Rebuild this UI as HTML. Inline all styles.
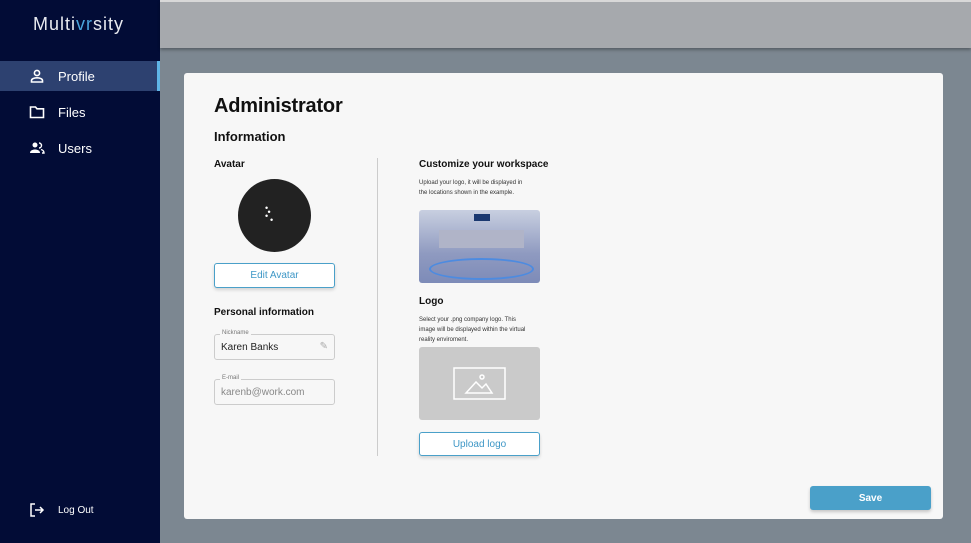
<!DOCTYPE html><html><head><style>
*{box-sizing:border-box;margin:0;padding:0}
body{width:971px;height:543px;overflow:hidden;background:#7c8791;font-family:"Liberation Sans",sans-serif;position:relative}
.side{position:absolute;left:0;top:0;width:160px;height:543px;background:#020c36;color:#fff}
.logo{position:absolute;left:33px;top:14px;font-size:18px;letter-spacing:1px;color:#e8eaf0}
.logo span{color:#4aa6df}
.nav{position:absolute;left:0;width:160px;height:30px;font-size:13px;display:flex;align-items:center}
.nav svg{position:absolute;left:29px}
.nav b{position:absolute;left:58px;font-weight:normal}
.act{background:#2d4170;border-right:3px solid #5fb5e6}
.top{position:absolute;left:160px;top:0;width:811px;height:48px;background:#a6a9ad;box-shadow:0 2px 3px rgba(0,0,0,.3);border-top:2px solid #d8d8d8}
.panel{position:absolute;left:184px;top:73px;width:759px;height:446px;background:#f7f7f7;border-radius:3px}
.a{position:absolute;color:#111}
.btn{position:absolute;border:1.5px solid #4aa0c9;border-radius:3px;background:#fff;color:#3e97c6;font-size:10px;display:flex;align-items:center;justify-content:center;box-shadow:0 2px 3px rgba(0,0,0,.15)}
.fld{position:absolute;border:1px solid #ccc;border-radius:3px;width:121px;height:26px;font-size:10px;color:#222;padding:7px 0 0 6px}
.fld i{position:absolute;top:-5px;left:5px;background:#f7f7f7;font-size:6px;color:#777;font-style:normal;padding:0 2px}
</style></head><body>
<div class="side">
<div class="logo">Multi<span>vr</span>sity</div>
<div class="nav act" style="top:61px"><svg width="16" height="16" viewBox="0 0 16 16" fill="none" stroke="#fff" stroke-width="1.6"><circle cx="8" cy="5" r="2.6"/><path d="M2.5 14v-1.5c0-1.5 2.5-2.7 5.5-2.7s5.5 1.2 5.5 2.7V14z"/></svg><b>Profile</b></div>
<div class="nav" style="top:97px"><svg width="16" height="16" viewBox="0 0 16 16" fill="none" stroke="#fff" stroke-width="1.6"><path d="M1.5 3h5l1.5 1.8h6.5v8.7h-13z"/></svg><b>Files</b></div>
<div class="nav" style="top:133px"><svg width="16" height="16" viewBox="0 0 16 16" fill="#fff"><circle cx="6" cy="5" r="2.5"/><path d="M1 13c0-2.5 2.5-3.5 5-3.5s5 1 5 3.5z"/><path d="M10 3a2.5 2.5 0 010 5M12 9.5c2 .5 3 1.5 3 3.5h-2" fill="none" stroke="#fff" stroke-width="1.4"/></svg><b>Users</b></div>
<div class="nav" style="top:495px;font-size:10px"><svg width="16" height="16" viewBox="0 0 16 16" fill="none" stroke="#fff" stroke-width="1.5"><path d="M6 2H2v12h4M6 8h8M11 5l3 3-3 3"/></svg><b>Log Out</b></div>
</div>
<div class="top"></div>
<div class="panel">
<div class="a" style="left:30px;top:22px;font-size:20px;font-weight:bold;letter-spacing:-.2px">Administrator</div>
<div class="a" style="left:30px;top:56px;font-size:13px;font-weight:bold">Information</div>
<div class="a" style="left:30px;top:86px;font-size:10px;font-weight:bold">Avatar</div>
<div style="position:absolute;left:54px;top:106px;width:73px;height:73px;border-radius:50%;background:#222"></div>
<div style="position:absolute;left:81px;top:133px;color:#fff;font-size:9px;line-height:4px">•<br>&nbsp;•<br>•<br>&nbsp;&nbsp;•</div>
<div class="btn" style="left:30px;top:190px;width:121px;height:25px">Edit Avatar</div>
<div class="a" style="left:30px;top:234px;font-size:10px;font-weight:bold">Personal information</div>
<div class="fld" style="left:30px;top:261px"><i>Nickname</i>Karen Banks<span style="position:absolute;right:6px;top:6px;color:#aaa">✎</span></div>
<div class="fld" style="left:30px;top:306px;color:#888"><i>E-mail</i>karenb@work.com</div>
<div style="position:absolute;left:193px;top:85px;width:1px;height:298px;background:#ccc"></div>
<div class="a" style="left:235px;top:86px;font-size:10px;font-weight:bold">Customize your workspace</div>
<div class="a" style="left:235px;top:105px;font-size:6px;line-height:10px;color:#333">Upload your logo, it will be displayed in<br>the locations shown in the example.</div>
<div style="position:absolute;left:235px;top:137px;width:121px;height:73px;border-radius:3px;background:linear-gradient(#c8cfe0,#8f9ac0 60%,#7d8bb8);overflow:hidden"><div style="position:absolute;left:20px;top:20px;width:85px;height:18px;background:#b0b4c8"></div><div style="position:absolute;left:10px;top:48px;width:105px;height:22px;border:2px solid #4d8be0;border-radius:50%"></div><div style="position:absolute;left:55px;top:4px;width:16px;height:7px;background:#1a3870"></div></div>
<div class="a" style="left:235px;top:223px;font-size:10px;font-weight:bold">Logo</div>
<div class="a" style="left:235px;top:242px;font-size:6px;line-height:10px;color:#333">Select your .png company logo. This<br>image will be displayed within the virtual<br>reality enviroment.</div>
<div style="position:absolute;left:235px;top:274px;width:121px;height:73px;border-radius:3px;background:#cacaca"><svg style="position:absolute;left:34px;top:20px" width="53" height="33" viewBox="0 0 53 33" fill="none" stroke="#fff" stroke-width="1.5"><rect x="1" y="1" width="51" height="31"/><path d="M13 26l10-11 6 6 4-4 6 9z"/><circle cx="29" cy="10" r="2"/></svg></div>
<div class="btn" style="left:235px;top:359px;width:121px;height:24px">Upload logo</div>
<div style="position:absolute;left:626px;top:413px;width:121px;height:24px;border-radius:3px;background:#4aa0c9;color:#fff;font-size:10px;font-weight:bold;display:flex;align-items:center;justify-content:center;box-shadow:0 2px 3px rgba(0,0,0,.2)">Save</div>
</div>
</body></html>
